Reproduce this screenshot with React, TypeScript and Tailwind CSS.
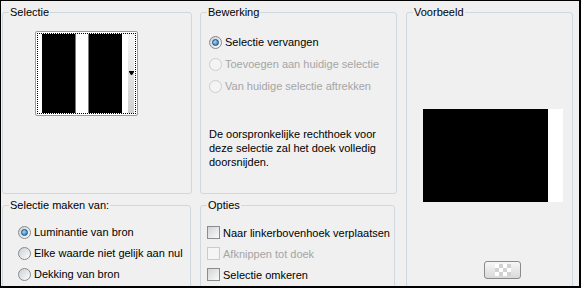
import React from "react";

type OptionProps = {
  label: string;
  checked?: boolean;
  disabled?: boolean;
};

const Radio = ({ label, checked, disabled }: OptionProps) => (
  <div className="flex h-[22px] items-center gap-[3px]">
    <span
      className={`flex size-[13px] shrink-0 items-center justify-center rounded-full border ${
        disabled
          ? "border-[#cdcdc8] bg-[#f4f4f4]"
          : "border-[#868a8d] bg-linear-to-br from-[#cdd0d2] to-[#fdfdfd]"
      }`}
    >
      {checked && (
        <span className="size-[7px] rounded-full border border-[#1c4f7c] bg-radial-[at_35%_35%] from-[#9fd6ff] to-[#1f6fb5]" />
      )}
    </span>
    <span className={disabled ? "text-[#a5a5a5]" : ""}>{label}</span>
  </div>
);

const Checkbox = ({ label, disabled }: OptionProps) => (
  <div className="flex h-[21px] items-center gap-[3px]">
    <span
      className={`size-[13px] shrink-0 border ${
        disabled
          ? "border-[#cbcbcb] bg-[#f5f5f5]"
          : "border-[#8a8c8e] bg-linear-to-br from-[#d2d4d6] to-[#fafafa]"
      }`}
    />
    <span className={disabled ? "text-[#a5a5a5]" : ""}>{label}</span>
  </div>
);

const Group = ({
  title,
  className,
  children,
}: {
  title: string;
  className: string;
  children?: React.ReactNode;
}) => (
  <fieldset className={`shrink-0 rounded-[3px] border border-[#d0d8df] ${className}`}>
    <legend className="ml-[6px] px-[1px] leading-[14px]">{title}</legend>
    {children}
  </fieldset>
);

const Swatch = () => (
  <div className="ml-[32px] mt-[12px] h-[85px] w-[103px] rounded-[2px] border border-[#9a9a9a] bg-white p-[1px]">
    <div className="flex h-full border border-dotted border-black bg-white pl-[4px]">
      <div className="w-[33px] bg-black" />
      <div className="w-px bg-[#7a7a7a]" />
      <div className="w-[12px] bg-white" />
      <div className="w-px bg-[#7a7a7a]" />
      <div className="w-[33px] bg-black" />
      <div className="w-[6px] bg-white" />
      <div className="flex w-[6px] justify-center bg-linear-to-b from-[#f6f6f6] to-[#d0d0d0] pt-[37px]">
        <svg width="5" height="4" viewBox="0 0 5 4">
          <path d="M0 0H5V1L3 4H2L0 1Z" fill="#000" />
        </svg>
      </div>
    </div>
  </div>
);

const Checker = () => (
  <svg width="16" height="12" viewBox="0 0 16 12">
    {[0, 1, 2].map((r) =>
      [0, 1, 2, 3].map((c) => (
        <rect
          key={`${r}-${c}`}
          x={c * 4}
          y={r * 4}
          width="4"
          height="4"
          fill={(r + c) % 2 === 0 ? "#ffffff" : "#d2d2d2"}
        />
      ))
    )}
  </svg>
);

export default function App() {
  return (
    <div className="h-[288px] w-[581px] overflow-hidden border-t border-r-2 border-b-2 border-l border-black bg-[#f0f0f0] font-['Liberation_Sans',Arial,sans-serif] text-[11px] leading-[14px] text-black">
      <div className="flex pt-[4px] pl-[1px]">
        <div className="flex w-[190px] shrink-0 flex-col gap-[4px]">
          <Group title="Selectie" className="h-[189px] w-[190px]">
            <Swatch />
          </Group>
          <Group title="Selectie maken van:" className="h-[100px] w-[189px]">
            <div className="flex flex-col pt-[9px] pl-[15px]">
              <Radio label="Luminantie van bron" checked />
              <div className="-mt-px">
                <Radio label="Elke waarde niet gelijk aan nul" />
              </div>
              <div className="-mt-px">
                <Radio label="Dekking van bron" />
              </div>
            </div>
          </Group>
        </div>

        <div className="ml-[8px] flex w-[196px] shrink-0 flex-col gap-[4px]">
          <Group title="Bewerking" className="h-[189px] w-[197px]">
            <div className="flex flex-col pt-[12px] pl-[8px]">
              <Radio label="Selectie vervangen" checked />
              <Radio label="Toevoegen aan huidige selectie" disabled />
              <Radio label="Van huidige selectie aftrekken" disabled />
              <p className="mt-[30px]">
                De oorspronkelijke rechthoek voor
                <br />
                deze selectie zal het doek volledig
                <br />
                doorsnijden.
              </p>
            </div>
          </Group>
          <Group title="Opties" className="h-[100px] w-[195px]">
            <div className="flex flex-col pt-[10px] pl-[6px]">
              <Checkbox label="Naar linkerbovenhoek verplaatsen" />
              <Checkbox label="Afknippen tot doek" disabled />
              <Checkbox label="Selectie omkeren" />
            </div>
          </Group>
        </div>

        <div className="ml-[10px] w-[167px] shrink-0">
          <Group title="Voorbeeld" className="h-[290px] w-[167px]">
            <div className="ml-[16px] mt-[90px] flex h-[93px] w-[140px]">
              <div className="w-[125px] bg-black" />
              <div className="w-[15px] bg-white" />
            </div>
            <button className="ml-[77px] mt-[59px] flex h-[18px] w-[37px] items-center justify-center rounded-[3px] border border-[#8a8a8a] bg-linear-to-b from-[#f7f7f7] to-[#d9d9d9]">
              <Checker />
            </button>
          </Group>
        </div>
      </div>
    </div>
  );
}
